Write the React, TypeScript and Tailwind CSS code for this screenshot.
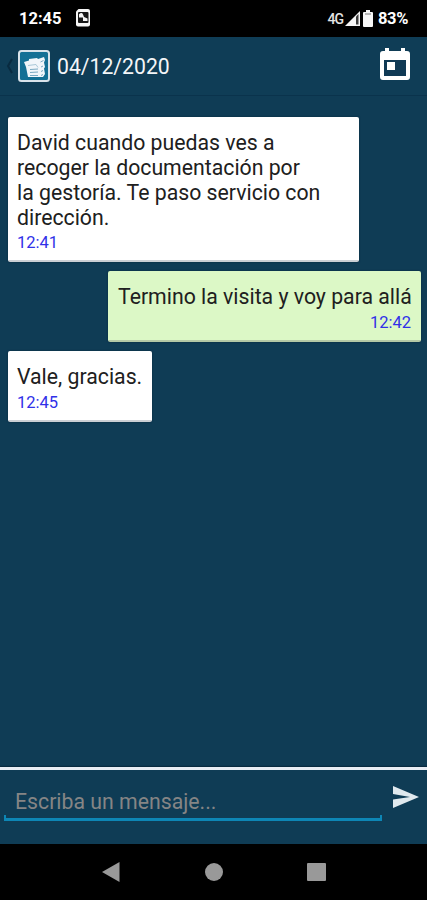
import React, { useState } from 'react';

interface MessageProps {
  lines: string[];
  time: string;
  own?: boolean;
}

const messages: MessageProps[] = [
  {
    lines: ['David cuando puedas ves a', 'recoger la documentación por', 'la gestoría. Te paso servicio con', 'dirección.'],
    time: '12:41',
  },
  { lines: ['Termino la visita y voy para allá'], time: '12:42', own: true },
  { lines: ['Vale, gracias.'], time: '12:45' },
];

const StatusBar: React.FC = () => (
  <div className="flex h-[37px] shrink-0 items-center bg-black pl-[19px] pr-[18px] text-white">
    <span className="mt-px w-[43px] whitespace-nowrap text-[16.5px] font-bold leading-5">12:45</span>
    <svg className="ml-[14px] mb-px h-[18px] w-[15px]" viewBox="0 0 15 18">
      <path d="M2.5 0H12a2 2 0 0 1 2 2v13.5a2 2 0 0 1-2 2H2a2 2 0 0 1-2-2V2.5z" fill="#f5f5f5" />
      <rect x="2" y="3" width="10.5" height="11" rx="1" fill="#161616" />
      <path d="M3 7a2 2 0 0 1 4-1.5l1 2.5 3.5 1.5V12H7V8.5H3z" fill="#f5f5f5" />
    </svg>
    <div className="ml-auto flex items-center">
      <span className="text-[14px] font-medium leading-5 tracking-[-1px] text-[#e4e4e4]">4G</span>
      <svg className="ml-[2px] h-[15px] w-[15px]" viewBox="0 0 15 15">
        <path d="M15 0v15H0z" fill="#f5f5f5" />
        <path d="M11 5.5l2.5-2.5v10.5H11z" fill="#3c3c3c" />
      </svg>
      <svg className="ml-[3px] h-[17px] w-[10px]" viewBox="0 0 10 17">
        <path d="M3 0h4v2h2a1 1 0 0 1 1 1v13a1 1 0 0 1-1 1H1a1 1 0 0 1-1-1V3a1 1 0 0 1 1-1h2z" fill="#f7f7f7" />
        <path d="M2 4h6" stroke="#777" strokeWidth="1" />
      </svg>
      <span className="ml-[5px] mt-px w-[31px] whitespace-nowrap text-[16.5px] font-bold leading-5 tracking-[-0.4px]">83%</span>
    </div>
  </div>
);

const Header: React.FC = () => (
  <header className="flex h-[59px] shrink-0 items-center border-b border-[#0a334c] bg-[#0f3d56] pl-[6px] pr-[17px]">
    <svg className="h-4 w-[7px]" viewBox="0 0 7 16" fill="none">
      <path d="M6 1 2 8l4 7" stroke="#092b40" strokeWidth="2" />
    </svg>
    <svg className="ml-[5px] h-8 w-8" viewBox="0 0 32 32">
      <rect x="1" y="1" width="30" height="30" rx="2.5" fill="#147095" stroke="#d9e3ea" strokeWidth="2" />
      <path d="M6 12l5-1.5V9l8-1 1 1 6-2 1 3-1 2.5 1 4.5-1 1.5 1 5.5-2 3H10L8 17z" fill="#f1f6fa" />
      <path d="M10 15.5l8-1 2 3" fill="none" stroke="#a9c8d8" />
      <path d="M12 19.5l8-.5M12 22.5l8-.5M12 25.5h8M22.5 12l3-1.5M23 17l2-1M23 21.5l2-1M23 25.5l2-1" stroke="#78a9c2" />
    </svg>
    <h1 className="ml-[7px] mt-[2px] text-[21.2px] leading-7 text-[#f4f6f8]">04/12/2020</h1>
    <svg className="ml-auto mb-[4px] h-8 w-[30px]" viewBox="0 0 30 32">
      <path
        d="M5 0h4v3h12V0h4v3h2a3 3 0 0 1 3 3v23a3 3 0 0 1-3 3H3a3 3 0 0 1-3-3V6a3 3 0 0 1 3-3h2zM4 12v16h22V12z"
        fill="#fff"
        fillRule="evenodd"
      />
      <path d="M4 12h22v16H4z" fill="#103a55" />
      <path d="M7 14h8v8H7z" fill="#fff" />
    </svg>
  </header>
);

const Message: React.FC<MessageProps> = (props) => {
  const { lines, time, own } = props;

  return (
    <div
      className={
        own
          ? 'w-[313px] self-end rounded-[2px] border-b-2 border-[#b4c9a6] bg-[#dcf8c6] px-[10px] pb-[7px] pt-[14px] text-right shadow-[0_0_2px_#06263a]'
          : `${lines.length > 1 ? 'w-[351px]' : 'w-[144px]'} self-start rounded-[2px] border-b-2 border-[#cbcfd4] bg-white px-[9px] pb-[7px] pt-[14px] shadow-[0_0_2px_#06263a]`
      }
    >
      {lines.map((line) => (
        <p key={line} className="whitespace-nowrap text-[21.25px] leading-[24.8px] text-[#202020]">
          {line}
        </p>
      ))}
      <p className="mt-[2px] text-[16.5px] leading-[21px] text-[#3030e8]">{time}</p>
    </div>
  );
};

const App: React.FC = () => {
  const [text, setText] = useState('');

  return (
    <div className="flex h-[900px] w-[427px] flex-col overflow-hidden bg-[#0f3c55] font-['Roboto',sans-serif]">
      <StatusBar />
      <Header />
      <main className="flex flex-1 flex-col gap-[9px] pl-2 pr-[6px] pt-[21.2px]">
        {messages.map((message) => (
          <Message key={message.time} {...message} />
        ))}
      </main>

      {/* composer */}
      <div className="flex h-[77px] shrink-0 items-start border-t-[3px] border-[#e8edf4] shadow-[0_-1px_1px_#082b40]">
        <div className="ml-1 mt-[14px] w-[378px]">
          <input
            value={text}
            onChange={(e) => setText(e.target.value)}
            placeholder="Escriba un mensaje..."
            className="block h-[31px] w-full px-[11px] pt-[5px] text-[21.25px] text-white outline-none placeholder:text-[#858585]"
          />
          <div className="h-[6px] border-x-2 border-b-[3px] border-[#0d86b5]" />
        </div>
        <svg className="ml-[11px] mt-[16px] h-[22px] w-[26px]" viewBox="0 0 26 22">
          <path d="M0 0l26 11L0 22v-8.5L17 11 0 8z" fill="#e0e9ee" />
        </svg>
      </div>

      <nav className="flex h-14 shrink-0 items-center bg-black pl-[102px]">
        <svg className="h-5 w-[18px]" viewBox="0 0 18 20">
          <path d="M17.5 0v20L0 10z" fill="#999" />
        </svg>
        <div className="ml-[85px] size-[18px] rounded-full bg-[#999]" />
        <div className="ml-[84px] h-[18px] w-[19px] rounded-[1px] bg-[#999]" />
      </nav>
    </div>
  );
};

export default App;
